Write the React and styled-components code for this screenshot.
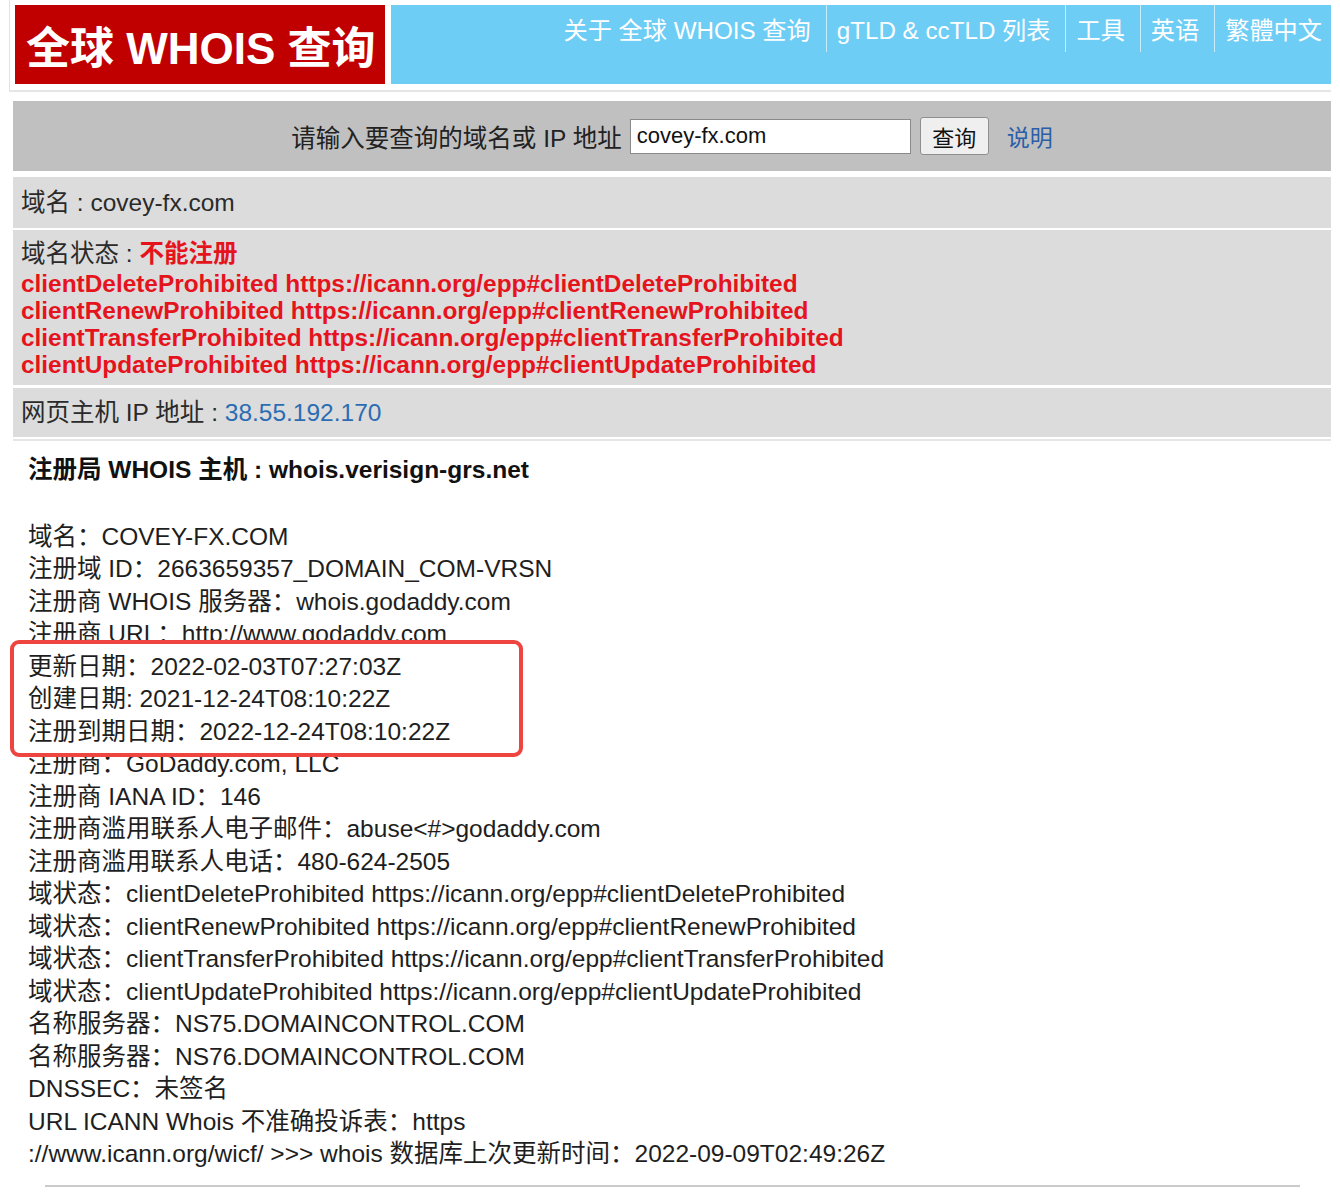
import React from "react";
import styled, { createGlobalStyle } from "styled-components";

const GlobalStyle = createGlobalStyle`
  * { box-sizing: border-box; }
  body {
    margin: 0;
    background: #fff;
    font-family: "Liberation Sans", Arial, "Noto Sans CJK SC", sans-serif;
    color: #1e1e1e;
  }
`;

const Page = styled.div`
  width: 1331px;
  padding-left: 9px;
  padding-bottom: 8px;
`;

const Header = styled.div`
  display: flex;
  gap: 6px;
  padding: 5px 0 6px 5px;
  border-left: 1px solid #e2e2e2;
  border-bottom: 2px solid #e6e6e6;
`;

const Logo = styled.div`
  width: 370px;
  height: 79px;
  background: #c00000;
  color: #fff;
  font-size: 44px;
  font-weight: 700;
  display: flex;
  align-items: center;
  padding-left: 11px;
  white-space: nowrap;
`;

const Nav = styled.div`
  flex: 1;
  height: 79px;
  background: #6dcdf5;
  display: flex;
  justify-content: flex-end;
  align-items: flex-start;
`;

const NavItem = styled.a`
  height: 47px;
  display: flex;
  align-items: center;
  padding: 0 ${(p) => (p.$last ? "9px" : "15px")} 0 10px;
  border-left: ${(p) => (p.$first ? "none" : "1px solid #c9ecfb")};
  color: #fff;
  font-size: 24.2px;
  white-space: nowrap;
  text-decoration: none;
`;

const SearchBar = styled.div`
  margin: 9px 0 0 4px;
  height: 70px;
  background: #c0c0c0;
  display: flex;
  align-items: center;
  justify-content: center;
  gap: 8px;
  font-size: 24.5px;
  color: #222;
`;

const Label = styled.span`
  white-space: nowrap;
`;

const Input = styled.input`
  width: 281px;
  height: 35px;
  margin-right: 1px;
  border: 1px solid #8a8a8a;
  padding: 0 6px;
  font-family: inherit;
  font-size: 22px;
  color: #111;
  background: #fff;
`;

const Button = styled.button`
  width: 69px;
  height: 38px;
  border: 1px solid #8f8f8f;
  border-radius: 3px;
  background: #efefef;
  font-family: inherit;
  font-size: 22px;
  color: #111;
  padding: 0;
`;

const HelpLink = styled.a`
  margin-left: 10px;
  color: #2a5ea8;
  font-size: 23px;
  text-decoration: none;
`;

const InfoRow = styled.div`
  margin: ${(p) => p.$gap}px 0 0 4px;
  background: #dcdcdc;
  padding: ${(p) => p.$pad || "0"} 0 ${(p) => p.$pad || "0"} 8px;
  min-height: ${(p) => p.$h}px;
  display: flex;
  flex-direction: column;
  justify-content: center;
  font-size: 24.5px;
  line-height: 32px;
  color: #2a2a2a;
`;

const RedWord = styled.span`
  color: #e5141c;
  font-weight: 700;
`;

const StatusLine = styled.div`
  color: #e5141c;
  font-weight: 700;
  font-size: 24.4px;
  line-height: 27px;
  white-space: nowrap;
`;

const Ip = styled.span`
  color: #2b6cb3;
`;

const Divider = styled.div`
  margin: 2px 0 0 4px;
  height: 2px;
  background: #e6e6e6;
`;

const Content = styled.div`
  padding: 13px 0 0 19px;
  font-size: 24.5px;
`;

const Heading = styled.div`
  font-weight: 700;
  line-height: 32px;
  margin-bottom: 34.75px;
  color: #111;
`;

const Line = styled.div`
  line-height: 32.5px;
  white-space: nowrap;
  color: #1e1e1e;
`;

const Highlight = styled.div`
  position: relative;
  z-index: 1;
  width: 495px;

  &::before {
    content: "";
    position: absolute;
    z-index: -1;
    top: -11px;
    bottom: -9px;
    left: -18px;
    right: 0;
    background: #fff;
    border: 4px solid #ee4540;
    border-radius: 9px;
  }
`;

const Rule = styled.div`
  margin: 14px 0 0 36px;
  width: 1255px;
  height: 2px;
  background: #cbcbcb;
`;

const navItems = ["关于 全球 WHOIS 查询", "gTLD & ccTLD 列表", "工具", "英语", "繁體中文"];

const statuses = [
  "clientDeleteProhibited",
  "clientRenewProhibited",
  "clientTransferProhibited",
  "clientUpdateProhibited",
];

const linesBefore = [
  "域名：COVEY-FX.COM",
  "注册域 ID：2663659357_DOMAIN_COM-VRSN",
  "注册商 WHOIS 服务器：whois.godaddy.com",
  "注册商 URL：http://www.godaddy.com",
];

const highlighted = [
  "更新日期：2022-02-03T07:27:03Z",
  "创建日期: 2021-12-24T08:10:22Z",
  "注册到期日期：2022-12-24T08:10:22Z",
];

const linesAfter = [
  "注册商：GoDaddy.com, LLC",
  "注册商 IANA ID：146",
  "注册商滥用联系人电子邮件：abuse<#>godaddy.com",
  "注册商滥用联系人电话：480-624-2505",
  ...statuses.map((s) => `域状态：${s} https://icann.org/epp#${s}`),
  "名称服务器：NS75.DOMAINCONTROL.COM",
  "名称服务器：NS76.DOMAINCONTROL.COM",
  "DNSSEC：未签名",
  "URL ICANN Whois 不准确投诉表：https",
  "://www.icann.org/wicf/ >>> whois 数据库上次更新时间：2022-09-09T02:49:26Z",
];

export default function App() {
  return (
    <>
      <GlobalStyle />
      <Page>
        <Header>
          <Logo>全球 WHOIS 查询</Logo>
          <Nav>
            {navItems.map((item, i) => (
              <NavItem
                key={item}
                href="#"
                $first={i === 0}
                $last={i === navItems.length - 1}
              >
                {item}
              </NavItem>
            ))}
          </Nav>
        </Header>

        <SearchBar>
          <Label>请输入要查询的域名或 IP 地址</Label>
          <Input defaultValue="covey-fx.com" />
          <Button>查询</Button>
          <HelpLink href="#">说明</HelpLink>
        </SearchBar>

        <InfoRow $gap={6} $h={51}>
          <div>域名 : covey-fx.com</div>
        </InfoRow>
        <InfoRow $gap={2} $h={155} $pad="7px">
          <div>
            域名状态 : <RedWord>不能注册</RedWord>
          </div>
          {statuses.map((s) => (
            <StatusLine key={s}>
              {s} https://icann.org/epp#{s}
            </StatusLine>
          ))}
        </InfoRow>
        <InfoRow $gap={3} $h={49}>
          <div>
            网页主机 IP 地址 : <Ip>38.55.192.170</Ip>
          </div>
        </InfoRow>
        <Divider />

        <Content>
          <Heading>注册局 WHOIS 主机 : whois.verisign-grs.net</Heading>
          {linesBefore.map((l) => (
            <Line key={l}>{l}</Line>
          ))}
          <Highlight>
            {highlighted.map((l) => (
              <Line key={l}>{l}</Line>
            ))}
          </Highlight>
          {linesAfter.map((l) => (
            <Line key={l}>{l}</Line>
          ))}
        </Content>
        <Rule />
      </Page>
    </>
  );
}
